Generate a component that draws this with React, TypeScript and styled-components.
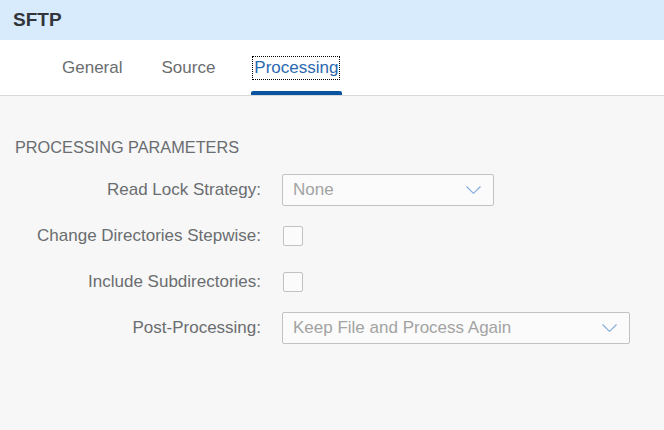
import React from "react";
import styled, { createGlobalStyle } from "styled-components";

const Global = createGlobalStyle`
  html, body { margin: 0; padding: 0; background: #f7f7f7; }
  body { font-family: "Liberation Sans", Arial, sans-serif; }
`;

const Page = styled.div`
  width: 664px;
  height: 430px;
  background: #f7f7f7;
  display: flex;
  flex-direction: column;
  overflow: hidden;
`;

const Header = styled.div`
  height: 40px;
  background: #d8ebfc;
  display: flex;
  align-items: center;
  padding-left: 13px;
  font-size: 19px;
  font-weight: 700;
  color: #32363a;
`;

const TabBar = styled.div`
  height: 55px;
  background: #ffffff;
  border-bottom: 1px solid #d9d9d9;
  display: flex;
  align-items: stretch;
  padding-left: 59px;
  gap: 32px;
`;

const Tab = styled.div<{ $active?: boolean }>`
  position: relative;
  display: flex;
  align-items: center;
  padding: 1px 3px 0 2px;
  font-size: 17px;
  color: ${(p) => (p.$active ? "#2a68b0" : "#6a6d70")};
  &::after {
    content: "";
    position: absolute;
    left: 0;
    right: 0;
    bottom: 0;
    height: 4px;
    border-radius: 2px 2px 0 0;
    background: ${(p) => (p.$active ? "#0854a0" : "transparent")};
  }
`;

const TabLabel = styled.span<{ $focus?: boolean }>`
  line-height: 20px;
  padding: 1px;
  outline: ${(p) => (p.$focus ? "1px dotted #000" : "none")};
`;

const Content = styled.div`
  padding: 41px 0 0 15px;
`;

const SectionTitle = styled.div`
  font-size: 16.3px;
  line-height: 20px;
  color: #6a6d70;
  text-transform: uppercase;
  margin-bottom: 17px;
`;

const Form = styled.div`
  display: grid;
  grid-template-columns: 246px auto;
  column-gap: 21px;
  row-gap: 14px;
  grid-auto-rows: 32px;
  align-items: center;
`;

const Label = styled.div`
  text-align: right;
  font-size: 17px;
  color: #6a6d70;
  white-space: nowrap;
`;

const Select = styled.div<{ $w: number }>`
  width: ${(p) => p.$w}px;
  height: 32px;
  box-sizing: border-box;
  border: 1px solid #c2c2c2;
  border-radius: 2px;
  background: #fbfbfb;
  display: flex;
  align-items: center;
  justify-content: space-between;
  padding: 0 12px 0 10px;
  font-size: 17px;
  color: #a3a3a3;
`;

const Check = styled.div`
  width: 20px;
  height: 20px;
  box-sizing: border-box;
  margin-left: 1px;
  border: 1px solid #c2c2c2;
  border-radius: 2px;
  background: #fbfbfb;
`;

const Chevron = () => (
  <svg width="15" height="8" viewBox="0 0 15 8" fill="none">
    <path d="M0.5 0.5 L7.5 7.3 L14.5 0.5" stroke="#7fa9dc" strokeWidth="1.1" />
  </svg>
);

export default function App() {
  return (
    <Page>
      <Global />
      <Header>SFTP</Header>
      <TabBar>
        <Tab>
          <TabLabel>General</TabLabel>
        </Tab>
        <Tab>
          <TabLabel>Source</TabLabel>
        </Tab>
        <Tab $active>
          <TabLabel $focus>Processing</TabLabel>
        </Tab>
      </TabBar>
      <Content>
        <SectionTitle>Processing Parameters</SectionTitle>
        <Form>
          <Label>Read Lock Strategy:</Label>
          <Select $w={212}>
            <span>None</span>
            <Chevron />
          </Select>
          <Label>Change Directories Stepwise:</Label>
          <Check />
          <Label>Include Subdirectories:</Label>
          <Check />
          <Label>Post-Processing:</Label>
          <Select $w={348}>
            <span>Keep File and Process Again</span>
            <Chevron />
          </Select>
        </Form>
      </Content>
    </Page>
  );
}
